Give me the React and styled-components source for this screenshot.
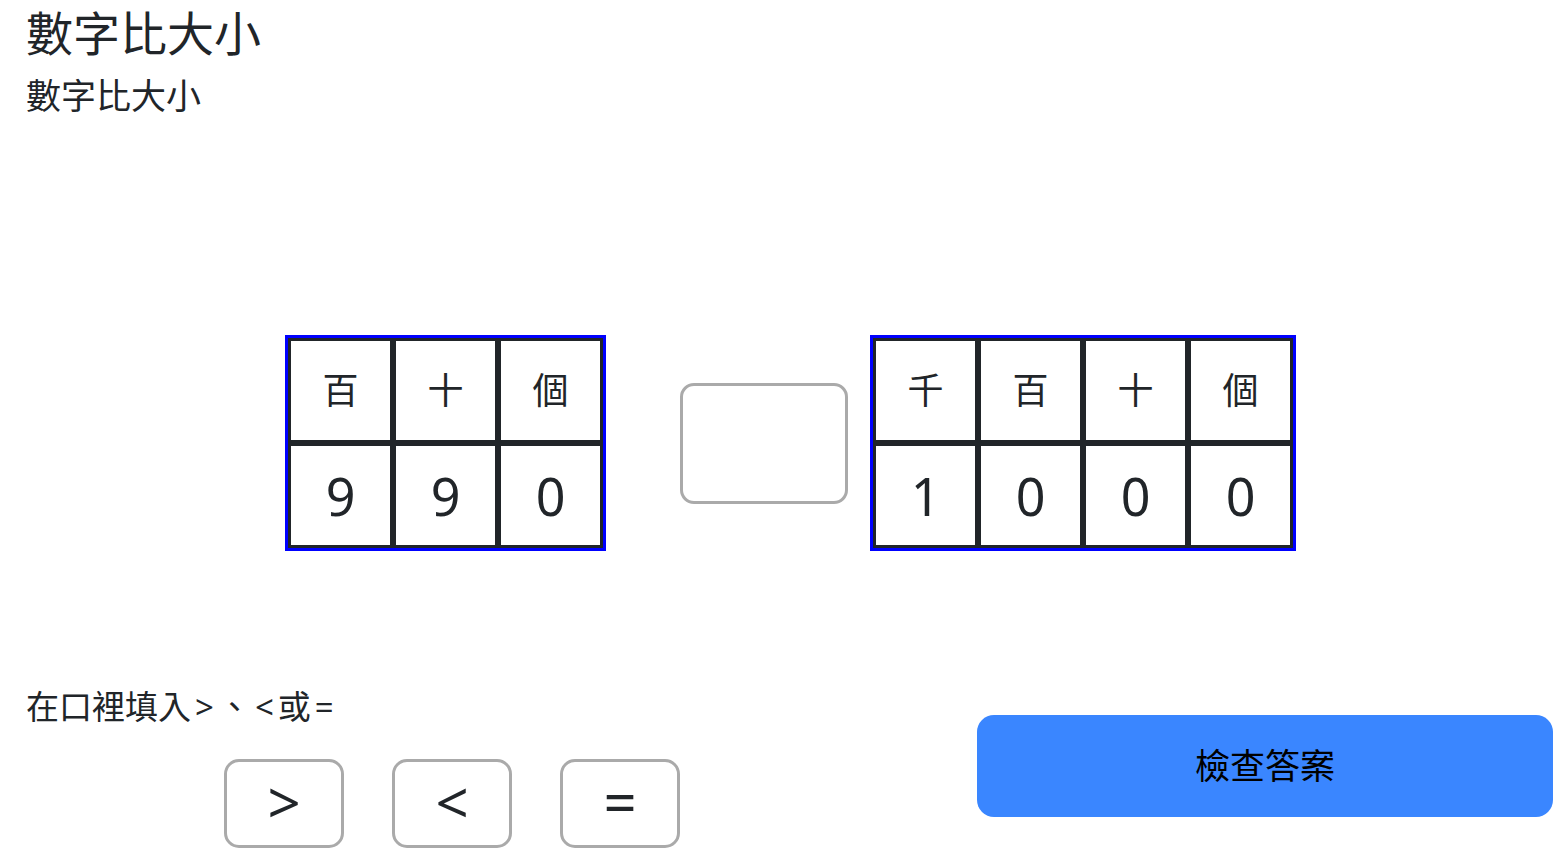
import React from "react";
import styled, { createGlobalStyle } from "styled-components";

const Global = createGlobalStyle`
  html, body { margin: 0; padding: 0; background: #fff; }
  body {
    font-family: "Noto Sans", "Noto Sans CJK TC", sans-serif;
    color: #212529;
  }
  * { box-sizing: border-box; }
`;

const Page = styled.div`
  width: 1561px;
  height: 856px;
  overflow: hidden;
  padding: 5px 8px 0 26px;
`;

const Title = styled.h1`
  margin: 0;
  font-size: 47px;
  line-height: 56px;
  font-weight: 400;
`;

const Subtitle = styled.h2`
  margin: 14px 0 0;
  font-size: 35px;
  line-height: 42px;
  font-weight: 400;
`;

const CompareRow = styled.div`
  display: flex;
  align-items: center;
  margin-top: 218px;
  padding-left: 259px;
`;

const NumberTable = styled.div`
  display: grid;
  grid-template-columns: repeat(${(p) => p.$cols}, 99px);
  grid-auto-rows: 99px;
  gap: 6px;
  padding: 3px;
  background: #212529;
  border: 3px solid #0000ff;
`;

const Cell = styled.div`
  background: #fff;
  display: flex;
  align-items: center;
  justify-content: center;
  font-size: ${(p) => (p.$head ? "36px" : "52px")};
  line-height: 1;
`;

const AnswerBox = styled.div`
  width: 168px;
  height: 121px;
  border: 3px solid #aaaaaa;
  border-radius: 14px;
  margin: 0 22px 0 74px;
`;

const Bottom = styled.div`
  display: grid;
  grid-template-columns: 1fr 576px;
  margin-top: 137px;
`;

const LeftCol = styled.div`
  display: flex;
  flex-direction: column;
`;

const Instruction = styled.p`
  margin: 0;
  font-size: 33px;
  line-height: 38px;
`;

const Sym = styled.span`
  padding: 0 4px;
`;

const OptionRow = styled.div`
  display: flex;
  gap: 48px;
  margin: 33px 0 0 198px;
`;

const OptionButton = styled.button`
  width: 120px;
  height: 89px;
  border: 3px solid #aaaaaa;
  border-radius: 15px;
  background: #fff;
  color: #212529;
  font-family: "Noto Sans", "Noto Sans CJK TC", sans-serif;
  font-size: 58px;
  line-height: 1;
  padding: 0 0 4px;
  display: flex;
  align-items: center;
  justify-content: center;
  cursor: pointer;
`;

const CheckButton = styled.button`
  margin-top: 27px;
  width: 576px;
  height: 102px;
  border: none;
  border-radius: 17px;
  background: #3a86ff;
  color: #000;
  font-family: "Noto Sans", "Noto Sans CJK TC", sans-serif;
  font-size: 35px;
  padding: 0 0 5px;
  cursor: pointer;
`;

const left = { heads: ["百", "十", "個"], digits: ["9", "9", "0"] };
const right = { heads: ["千", "百", "十", "個"], digits: ["1", "0", "0", "0"] };

function PlaceTable({ data }) {
  return (
    <NumberTable $cols={data.heads.length}>
      {data.heads.map((h, i) => (
        <Cell key={"h" + i} $head>
          {h}
        </Cell>
      ))}
      {data.digits.map((d, i) => (
        <Cell key={"d" + i}>{d}</Cell>
      ))}
    </NumberTable>
  );
}

export default function App() {
  return (
    <>
      <Global />
      <Page>
        <Title>數字比大小</Title>
        <Subtitle>數字比大小</Subtitle>
        <CompareRow>
          <PlaceTable data={left} />
          <AnswerBox />
          <PlaceTable data={right} />
        </CompareRow>
        <Bottom>
          <LeftCol>
            <Instruction>
              在口裡填入<Sym>&gt;</Sym>、<Sym>&lt;</Sym>或<Sym>=</Sym>
            </Instruction>
            <OptionRow>
              <OptionButton>&gt;</OptionButton>
              <OptionButton>&lt;</OptionButton>
              <OptionButton>=</OptionButton>
            </OptionRow>
          </LeftCol>
          <div>
            <CheckButton>檢查答案</CheckButton>
          </div>
        </Bottom>
      </Page>
    </>
  );
}
